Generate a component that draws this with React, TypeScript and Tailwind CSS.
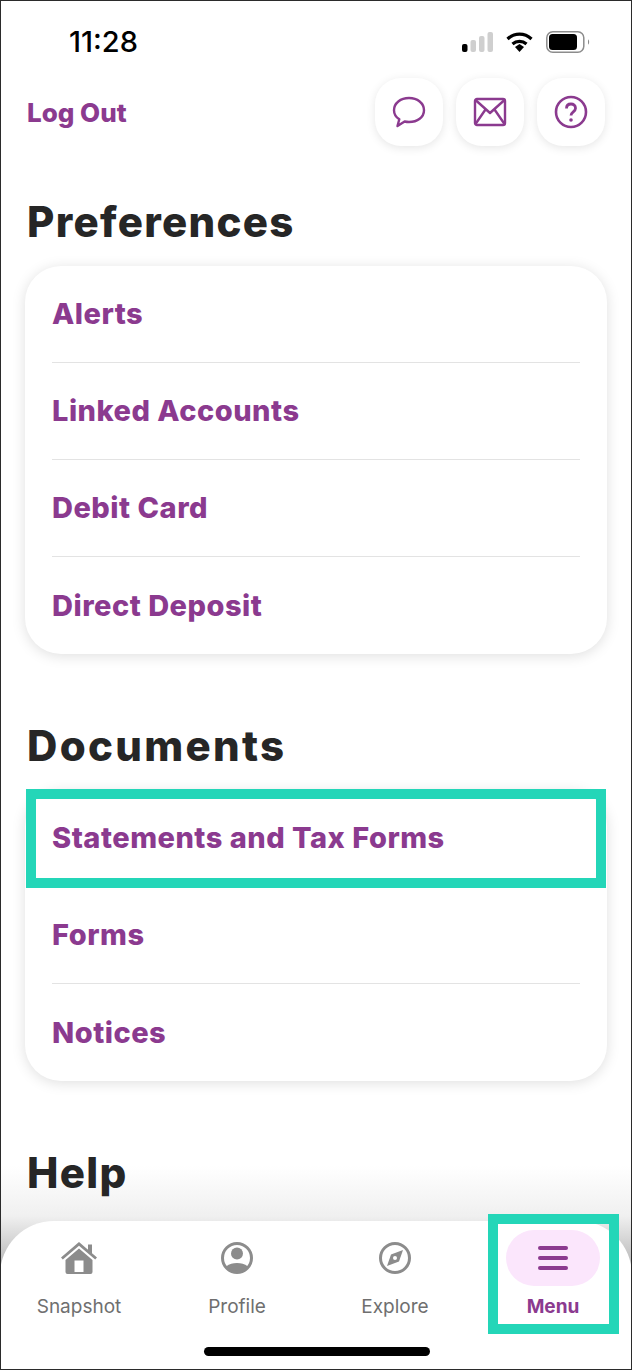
const purple = "text-[#8b3a8f]";

const Row = ({ label, last }: { label: string; last?: boolean }) => (
  <div className={`mx-[27px] flex h-[97px] items-center ${last ? "" : "border-b border-[#e3e3e3]"}`}>
    <span className={`text-[29px] font-extrabold tracking-[0.5px] ${purple}`}>{label}</span>
  </div>
);

const Section = ({ title, items, spacing }: { title: string; items: string[]; spacing: string }) => (
  <section>
    <h2 className={`relative z-10 h-[44px] pl-[2px] text-[42px] leading-[44px] font-extrabold text-[#262626] ${spacing}`}>{title}</h2>
    <div className="mt-[22px] min-h-[97px] rounded-[36px] bg-white shadow-[0_2px_14px_rgba(0,0,0,0.13)]">
      {items.map((item, i) => (
        <Row key={item} label={item} last={i === items.length - 1} />
      ))}
    </div>
  </section>
);

const IconButton = ({ children }: { children: React.ReactNode }) => (
  <div className="flex h-[68px] w-[68px] items-center justify-center rounded-[26px] bg-white shadow-[0_2px_10px_rgba(0,0,0,0.1)]">
    {children}
  </div>
);

const NavItem = ({ label, children }: { label: string; children: React.ReactNode }) => (
  <div className="flex w-[158px] flex-col items-center">
    <div className="flex h-[56px] items-center justify-center">{children}</div>
    <span className="mt-[9px] text-[19px] leading-[24px] text-[#6f6f6f]">{label}</span>
  </div>
);

export default function App() {
  return (
    <div className="relative h-[1370px] w-[632px] overflow-hidden border border-[#2b2b2b] bg-white font-['Inter',sans-serif]">
      {/* status bar */}
      <div className="flex h-[77px] items-start justify-between pt-[23px] pr-[41px] pl-[68px]">
        <span className="text-[29px] leading-[36px] font-medium text-black">11:28</span>
        <div className="flex items-center gap-[13px] pt-[7px]">
          <svg width="31" height="20" viewBox="0 0 31 20">
            <rect x="0" y="12" width="5.500" height="8" rx="2" fill="#000" />
            <rect x="8.500" y="8" width="5.500" height="12" rx="2" fill="#cfcfcf" />
            <rect x="17" y="4" width="5.500" height="16" rx="2" fill="#cfcfcf" />
            <rect x="25.500" y="0" width="5.500" height="20" rx="2" fill="#cfcfcf" />
          </svg>
          <svg width="27" height="20" viewBox="0 0 27 20">
            <path d="M1.500 7C8.500 0.500 18.500 0.500 25.500 7" fill="none" stroke="#000" strokeWidth="3.200" />
            <path d="M6.500 12C10.500 8.500 16.500 8.500 20.500 12" fill="none" stroke="#000" strokeWidth="3.200" />
            <path d="M9 15l4.500-3 4.500 3-4.500 5z" fill="#000" />
          </svg>
          <svg width="44" height="22" viewBox="0 0 44 22">
            <rect x="0.800" y="0.800" width="37" height="20.400" rx="6" fill="none" stroke="#8c8c8c" strokeWidth="1.500" />
            <rect x="3" y="3" width="28" height="16" rx="3.500" fill="#000" />
            <path d="M42 8.500c1.500.5 1.500 4.500 0 5z" fill="#8c8c8c" />
          </svg>
        </div>
      </div>

      {/* header */}
      <div className="flex items-center justify-between pr-[26px] pl-[26px]">
        <span className={`text-[26px] font-extrabold ${purple}`}>Log Out</span>
        <div className="flex gap-[13px]">
          <IconButton>
            <svg width="34" height="32" viewBox="0 0 34 32" fill="none" stroke="#8b3a8f" strokeWidth="2.400" strokeLinejoin="round">
              <path d="M17 2c8.500 0 15 5.200 15 12.200S25.500 26 17 26c-1.500 0-3-.2-4.400-.5L5.500 30l1.800-6.700C3.800 21 2 18 2 14.200 2 7.200 8.500 2 17 2z" />
            </svg>
          </IconButton>
          <IconButton>
            <svg width="34" height="30" viewBox="0 0 34 30" fill="none" stroke="#8b3a8f" strokeWidth="2.400" strokeLinejoin="round">
              <rect x="2" y="2" width="30" height="26" rx="2" />
              <path d="M2.500 3l14.500 13L31.500 3M2.500 27l10-14.500M31.500 27l-10-14.500" />
            </svg>
          </IconButton>
          <IconButton>
            <svg width="34" height="34" viewBox="0 0 34 34" fill="none" stroke="#8b3a8f" strokeWidth="2.600">
              <circle cx="17" cy="17" r="15" />
              <path d="M12.500 13.500c0-3 2-4.500 4.500-4.500s4.500 1.600 4.500 4.200c0 3.600-4.500 3.600-4.500 7.300" strokeWidth="2.800" />
              <circle cx="17" cy="25" r="1.800" fill="#8b3a8f" stroke="none" />
            </svg>
          </IconButton>
        </div>
      </div>

      {/* content */}
      <div className="flex flex-col gap-[70px] px-[24px] pt-[54px]">
        <Section title="Preferences" spacing="tracking-[1.300px]" items={["Alerts", "Linked Accounts", "Debit Card", "Direct Deposit"]} />
        <Section title="Documents" spacing="tracking-[2.300px]" items={["Statements and Tax Forms", "Forms", "Notices"]} />
        <Section title="Help" spacing="tracking-[1.300px]" items={[]} />
      </div>

      {/* annotation around statements row */}
      <div className="absolute top-[788px] left-[25px] h-[99px] w-[580px] border-[10px] border-[#24d6b8]" />

      {/* bottom nav */}
      <div className="absolute top-[1165px] left-0 h-[100px] w-full bg-gradient-to-b from-transparent via-[#f0f0f0] via-50% to-[#b8b8b8]" />
      <div className="absolute top-[1220px] right-[-1px] left-[-1px] h-[150px] rounded-t-[54px] bg-white">
        <div className="flex pt-[9px]">
          <NavItem label="Snapshot">
            <svg width="36" height="32" viewBox="0 0 36 32" fill="#8c8c8c">
              <path d="M18 0L36 15.500l-1.800 2L18 3.800 1.800 17.500 0 15.500z" />
              <path d="M27 2.500h4v9.500l-4-3.500z" />
              <path fillRule="evenodd" d="M18 6.500L31.500 18v12a2 2 0 0 1-2 2h-23a2 2 0 0 1-2-2V18zM13.500 18.500V30h9V18.500z" />
            </svg>
          </NavItem>
          <NavItem label="Profile">
            <svg width="32" height="32" viewBox="0 0 32 32">
              <defs>
                <clipPath id="profile-clip">
                  <circle cx="16" cy="16" r="14.500" />
                </clipPath>
              </defs>
              <circle cx="16" cy="11.500" r="6" fill="#8c8c8c" />
              <ellipse cx="16" cy="32" rx="15" ry="11" fill="#8c8c8c" clipPath="url(#profile-clip)" />
              <circle cx="16" cy="16" r="14.500" fill="none" stroke="#8c8c8c" strokeWidth="3" />
            </svg>
          </NavItem>
          <NavItem label="Explore">
            <svg width="32" height="32" viewBox="0 0 32 32">
              <circle cx="16" cy="16" r="14.500" fill="none" stroke="#8c8c8c" strokeWidth="3" />
              <path d="M24 8l-4 11.500L8 24l4-11.500z" fill="#8c8c8c" />
              <circle cx="16" cy="16" r="2" fill="#fff" />
            </svg>
          </NavItem>
          <div className="flex w-[158px] flex-col items-center">
            <div className="flex h-[56px] w-[94px] items-center justify-center rounded-[28px] bg-[#fbe6fc]">
              <svg width="30" height="26" viewBox="0 0 30 26" fill="#8b3a8f">
                <rect x="0" y="1" width="30" height="4" rx="2" />
                <rect x="0" y="11" width="30" height="4" rx="2" />
                <rect x="0" y="21" width="30" height="4" rx="2" />
              </svg>
            </div>
            <span className={`mt-[9px] text-[19px] leading-[24px] font-bold ${purple}`}>Menu</span>
          </div>
        </div>
      </div>

      {/* annotation around menu tab */}
      <div className="absolute top-[1213px] left-[487px] h-[120px] w-[131px] border-[10px] border-[#24d6b8]" />

      {/* home indicator */}
      <div className="absolute top-[1346px] left-[203px] h-[9px] w-[226px] rounded-full bg-black" />
    </div>
  );
}
